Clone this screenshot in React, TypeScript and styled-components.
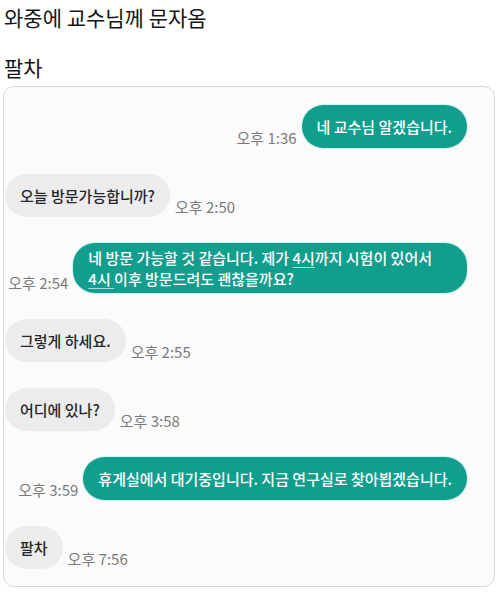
import React from "react";
import styled, { createGlobalStyle } from "styled-components";

const Global = createGlobalStyle`
  html, body { margin: 0; padding: 0; background: #ffffff; }
  body { font-family: "Noto Sans CJK KR", "Noto Sans", sans-serif; color: #111; }
`;

const Page = styled.div`
  width: 500px;
  height: 595px;
  padding: 0 5px 0 3px;
  box-sizing: border-box;
  display: flex;
  flex-direction: column;
`;

const Title = styled.p`
  margin: 0;
  padding-left: 1px;
  font-size: 21px;
  line-height: 28px;
  font-weight: 400;
  color: #161616;
`;

const FirstTitle = styled(Title)`
  margin-top: 3px;
`;

const SecondTitle = styled(Title)`
  margin-top: 22px;
`;

const Card = styled.div`
  margin-top: 5px;
  height: 501px;
  box-sizing: border-box;
  border: 1px solid #d9d9d9;
  border-radius: 11px;
  background: #fbfbfb;
  padding: 18px 27px 16px 1px;
  display: flex;
  flex-direction: column;
  gap: 26px;
`;

const Row = styled.div<{ $sent?: boolean }>`
  display: flex;
  align-items: flex-end;
  justify-content: ${(p) => (p.$sent ? "flex-end" : "flex-start")};
  gap: 5px;
`;

const Bubble = styled.div<{ $sent?: boolean }>`
  min-height: 43px;
  box-sizing: border-box;
  display: flex;
  align-items: center;
  padding: 4px 15px;
  border-radius: 22px;
  font-size: 15px;
  line-height: 21px;
  font-weight: 500;
  letter-spacing: 0;
  background: ${(p) => (p.$sent ? "#129e8c" : "#ececec")};
  color: ${(p) => (p.$sent ? "#ffffff" : "#262626")};
  box-shadow: ${(p) => (p.$sent ? "0 0 0 1px rgba(120, 230, 220, 0.35)" : "none")};
`;

const Multi = styled.span`
  display: block;
  padding-right: 20px;
`;

const Link = styled.span`
  text-decoration: underline;
  text-decoration-color: rgba(255, 255, 255, 0.65);
  text-decoration-thickness: 1px;
  text-underline-offset: 3px;
`;

const Time = styled.span`
  font-size: 15px;
  line-height: 18px;
  color: #7a7a7a;
  white-space: nowrap;
  padding-bottom: 1px;
`;

type Msg = { sent?: boolean; time: string; content: React.ReactNode };

const messages: Msg[] = [
  { sent: true, time: "오후 1:36", content: "네 교수님 알겠습니다." },
  { time: "오후 2:50", content: "오늘 방문가능합니까?" },
  {
    sent: true,
    time: "오후 2:54",
    content: (
      <Multi>
        네 방문 가능할 것 같습니다. 제가 <Link>4시</Link>까지 시험이 있어서
        <br />
        <Link>4시 </Link>이후 방문드려도 괜찮을까요?
      </Multi>
    ),
  },
  { time: "오후 2:55", content: "그렇게 하세요." },
  { time: "오후 3:58", content: "어디에 있나?" },
  {
    sent: true,
    time: "오후 3:59",
    content: "휴게실에서 대기중입니다. 지금 연구실로 찾아뵙겠습니다.",
  },
  { time: "오후 7:56", content: "팔차" },
];

export default function App() {
  return (
    <>
      <Global />
      <Page>
        <FirstTitle>와중에 교수님께 문자옴</FirstTitle>
        <SecondTitle>팔차</SecondTitle>
        <Card>
          {messages.map((m, i) => (
            <Row key={i} $sent={m.sent}>
              {m.sent && <Time>{m.time}</Time>}
              <Bubble $sent={m.sent}>{m.content}</Bubble>
              {!m.sent && <Time>{m.time}</Time>}
            </Row>
          ))}
        </Card>
      </Page>
    </>
  );
}
